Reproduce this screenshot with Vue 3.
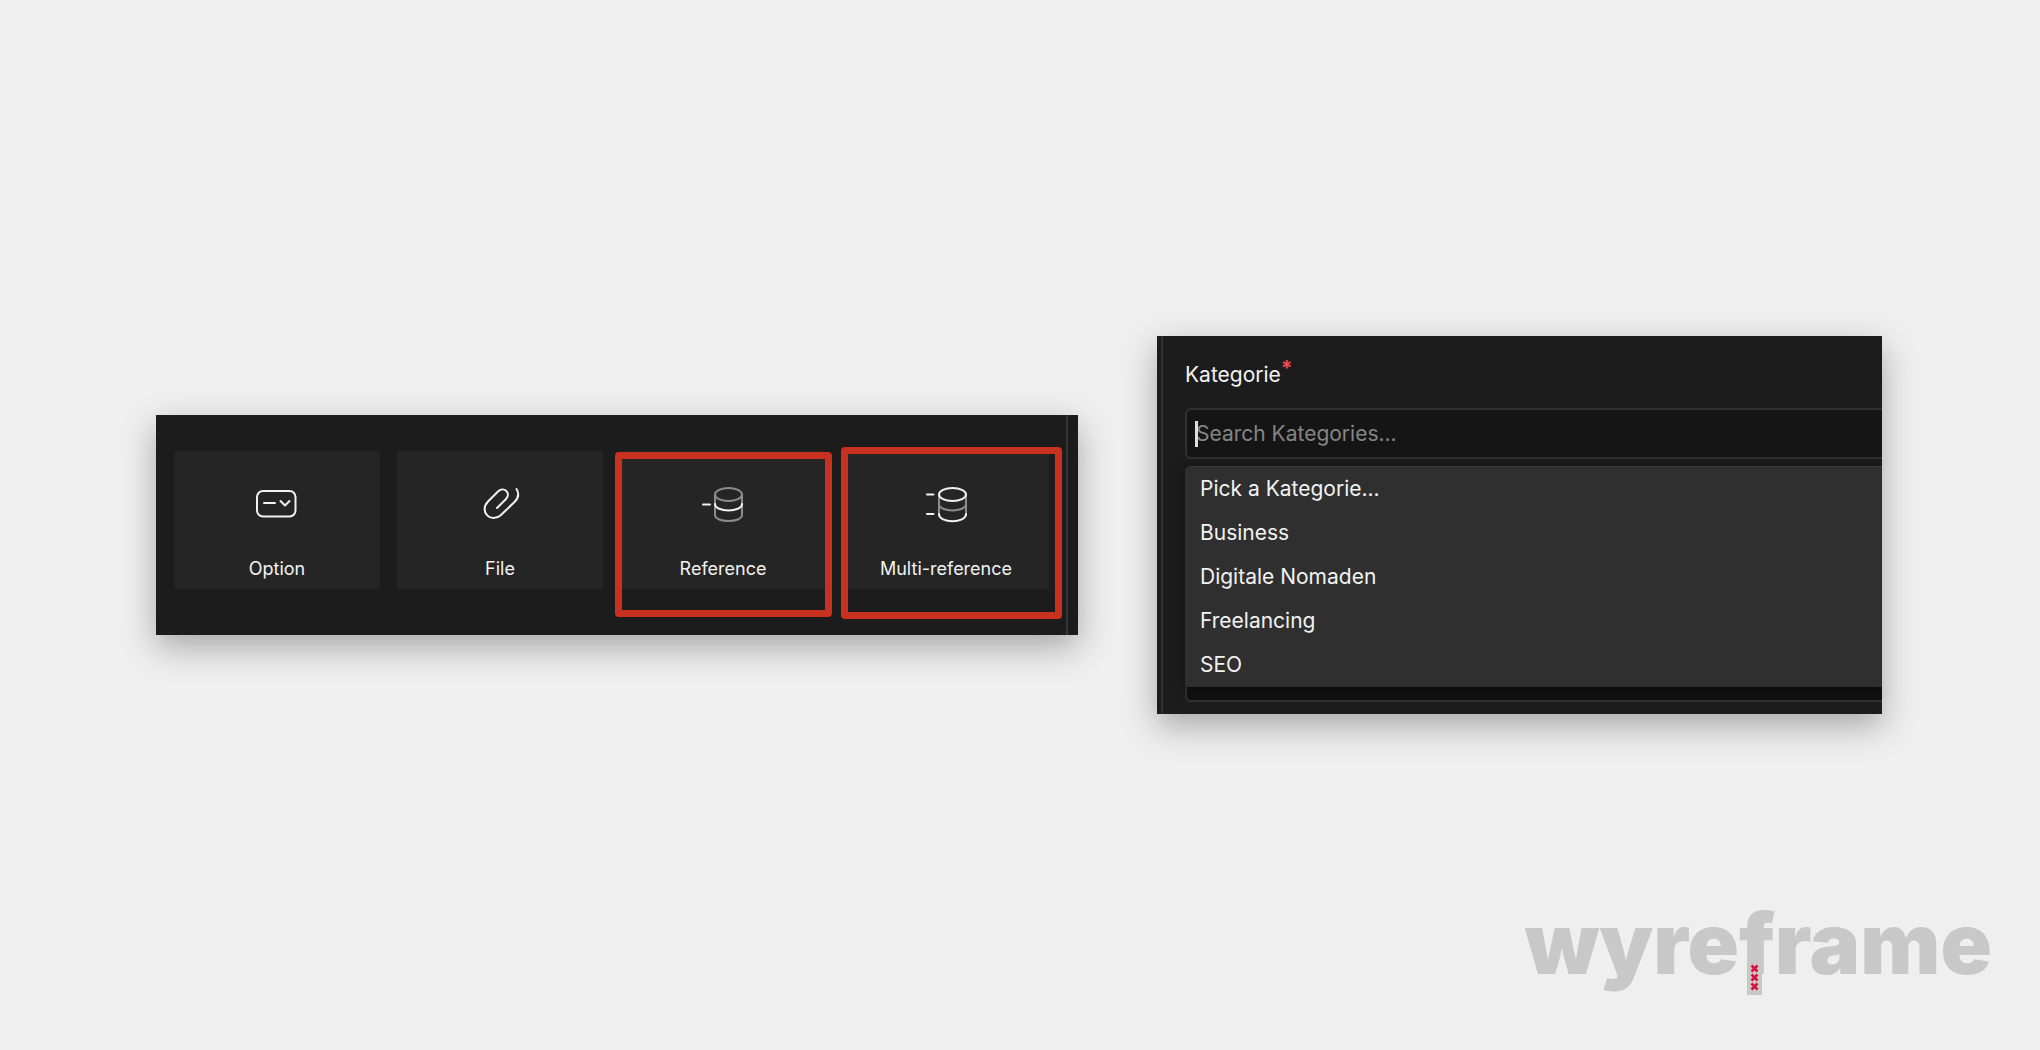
<template>
  <main class="stage">
    <div class="panels">
      <!-- Field type picker -->
      <section class="types" aria-label="Field types">
        <div class="tiles">
          <button v-for="t in types" :key="t.id" type="button" class="tile">
            <svg class="tile-icon" viewBox="0 0 60 42" aria-hidden="true">
              <g v-if="t.id === 'option'">
                <rect x="10" y="8" width="38.5" height="25.5" rx="6" />
                <path d="M17 20H28M33.5 18L38 22.5L42.5 18" />
              </g>
              <path
                v-else-if="t.id === 'file'"
                d="M27 25L36 16C41.5 10 34 3 28 8.5L18 18.5C8.5 28.5 21 41 31 32L44.5 19C49 14.5 49 10 46.5 6"
              />
              <g v-else-if="t.id === 'reference'">
                <path d="M10 21.5H17" />
                <g class="dim">
                  <ellipse cx="35.5" cy="11.5" rx="13.5" ry="6.5" />
                  <path d="M22 11.5V32C22 40 49 40 49 32V11.5" />
                </g>
                <path d="M22 21C22 29.5 49 29.5 49 21" />
              </g>
              <g v-else>
                <path d="M11 11.5H17.5M11 31H17.5" />
                <path class="dim" d="M23 11.5V32M50 11.5V32M23 21C23 29.5 50 29.5 50 21" />
                <ellipse cx="36.5" cy="11.5" rx="13.5" ry="6.5" />
                <path d="M23 31C23 40.5 50 40.5 50 31" />
              </g>
            </svg>
            <span class="tile-label">{{ t.label }}</span>
            <span v-if="t.mark" class="mark" :class="t.mark"></span>
          </button>
        </div>
      </section>

      <!-- Reference field with its open menu -->
      <section class="editor" aria-label="Kategorie">
        <label class="field-label" for="kategorie">Kategorie<span class="required">*</span></label>
        <div class="combo">
          <input id="kategorie" v-model="query" class="field" type="text" placeholder="Search Kategories..." />
          <span class="caret"></span>
          <ul class="menu">
            <li v-for="o in options" :key="o">
              <button type="button" class="menu-item">{{ o }}</button>
            </li>
          </ul>
        </div>
        <input class="field next-field" type="text" aria-label="Next field" />
      </section>
    </div>

    <footer class="footer">
      <a href="#" class="logo">wyre<span class="logo-f">f<svg class="logo-stem" viewBox="0 0 15 36" aria-hidden="true">
        <rect width="15" height="36" />
        <path d="M4.5 6.5L10.5 12.5M10.5 6.5L4.5 12.5M4.5 15.5L10.5 21.5M10.5 15.5L4.5 21.5M4.5 24.5L10.5 30.5M10.5 24.5L4.5 30.5" />
      </svg></span>rame</a>
    </footer>
  </main>
</template>

<script setup>
import { ref } from 'vue'

const query = ref('')

const types = [
  { id: 'option', label: 'Option' },
  { id: 'file', label: 'File' },
  { id: 'reference', label: 'Reference', mark: 'mark-single' },
  { id: 'multi', label: 'Multi-reference', mark: 'mark-multi' },
]

const options = ['Pick a Kategorie...', 'Business', 'Digitale Nomaden', 'Freelancing', 'SEO']
</script>

<style>
body {
  margin: 0;
  background: #efefef;
}
</style>

<style scoped>
.stage {
  box-sizing: border-box;
  min-height: 100vh;
  display: grid;
  grid-template-rows: 1fr auto 1fr;
  font-family: Inter, "Liberation Sans", sans-serif;
  color: #f2f2f2;
}

.panels {
  grid-row: 2;
  display: grid;
  grid-template-columns: 922fr 725fr;
  align-items: center;
  gap: 79px;
  padding: 0 158px 0 156px;
}

.types,
.editor {
  box-sizing: border-box;
  min-width: 0;
  background: #1c1c1c;
}

.types {
  padding-right: 10px;
  box-shadow: 0 12px 32px rgba(0, 0, 0, 0.3);
}

.tiles {
  display: flex;
  gap: 17px;
  padding: 36px 17px 46px 18px;
  border-right: 2px solid #363636;
}

.tile {
  position: relative;
  flex: 1 1 0;
  min-width: 0;
  height: 138px;
  padding: 32px 0 0;
  border: 0;
  border-radius: 4px;
  background: #252525;
  color: inherit;
  font: inherit;
  display: flex;
  flex-direction: column;
  align-items: center;
  gap: 32px;
}

.tile-icon {
  width: 60px;
  height: 42px;
  fill: none;
  stroke: #f2f2f2;
  stroke-width: 2;
  stroke-linecap: round;
  stroke-linejoin: round;
}

.dim {
  stroke: #8c8c8c;
}

.tile-label {
  font-size: 18px;
  line-height: 24px;
  white-space: nowrap;
}

.mark {
  position: absolute;
  border: 7px solid #c83020;
  border-radius: 4px;
}

.mark-single {
  inset: 1px -6px -28px -5px;
}

.mark-multi {
  inset: -4px -13px -30px -2px;
}

.editor {
  padding: 24px 0 12px 28px;
  box-shadow: inset 4px 0 #1c1c1c, inset 6px 0 #303030, 0 12px 32px rgba(0, 0, 0, 0.3);
  overflow: hidden;
}

.field-label {
  display: block;
  margin-bottom: 18px;
  font-size: 21px;
  line-height: 30px;
}

.required {
  position: relative;
  top: -6px;
  color: #f0484c;
  font-weight: 700;
}

.combo {
  position: relative;
}

.field {
  display: block;
  box-sizing: border-box;
  width: 100%;
  height: 51px;
  padding: 0 9px;
  border: 2px solid #303030;
  border-right: 0;
  border-radius: 6px 0 0 6px;
  background: #151515;
  color: inherit;
  font: inherit;
  font-size: 21px;
  outline: none;
}

.field::placeholder {
  color: #858585;
  opacity: 1;
}

.caret {
  position: absolute;
  left: 10px;
  top: 13px;
  width: 3px;
  height: 26px;
  background: #dedede;
}

.menu {
  position: absolute;
  top: 58px;
  left: 0;
  right: 0;
  margin: 0;
  padding: 0;
  list-style: none;
  border-top: 1px solid #383838;
  border-radius: 6px 0 0 4px;
  background: #2f2f2f;
  box-shadow: 0 2px 12px rgba(0, 0, 0, 0.4);
}

.menu-item {
  display: block;
  width: 100%;
  height: 44px;
  padding: 0 15px;
  border: 0;
  background: none;
  color: inherit;
  font: inherit;
  font-size: 21px;
  line-height: 44px;
  text-align: left;
}

.next-field {
  margin-top: 192px;
  background: #111;
}

.footer {
  grid-row: 3;
  align-self: end;
  display: flex;
  justify-content: flex-end;
  padding: 0 48px 56px 0;
}

.logo {
  font-size: 85px;
  font-weight: 900;
  line-height: 100px;
  color: #c8c8c8;
  text-decoration: none;
}

.logo-f {
  position: relative;
}

.logo-stem {
  position: absolute;
  left: 8px;
  bottom: 0;
  width: 15px;
  height: 36px;
  fill: #c8c8c8;
}

.logo-stem path {
  stroke: #d8103c;
  stroke-width: 2.5;
}
</style>
